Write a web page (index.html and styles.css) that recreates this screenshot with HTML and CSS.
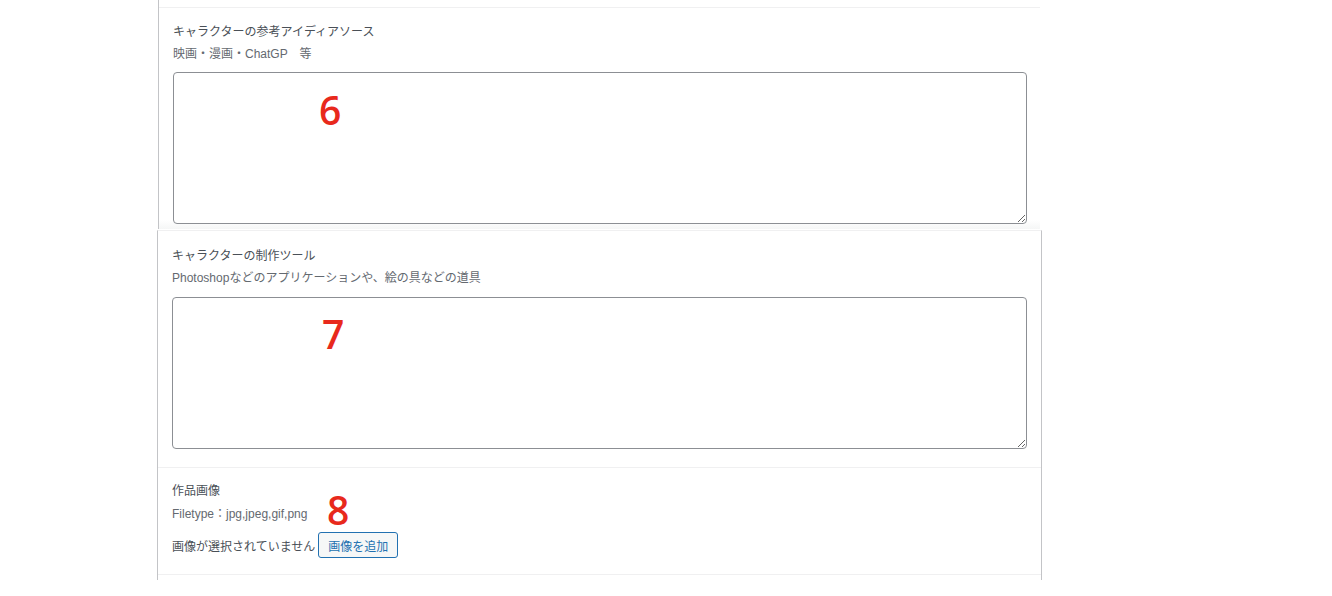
FILE: index.html
```html
<!DOCTYPE html>
<html lang="ja">
<head>
<meta charset="utf-8">
<link rel="stylesheet" href="styles.css">
</head>
<body>
<div class="page">
  <section class="panel panel-top">
    <div class="row-tail"></div>
    <div class="field">
      <div class="label">キャラクターの参考アイディアソース</div>
      <div class="desc">映画・漫画・ChatGP　等</div>
      <div class="area-wrap">
        <textarea class="area"></textarea>
        <span class="mark mark-6">6</span>
      </div>
    </div>
  </section>
  <section class="panel panel-bottom">
    <div class="field field-sep">
      <div class="label">キャラクターの制作ツール</div>
      <div class="desc">Photoshopなどのアプリケーションや、絵の具などの道具</div>
      <div class="area-wrap">
        <textarea class="area"></textarea>
        <span class="mark mark-7">7</span>
      </div>
    </div>
    <div class="field field-img">
      <div class="label">作品画像</div>
      <div class="desc desc-rel">Filetype：jpg,jpeg,gif,png<span class="mark mark-8">8</span></div>
      <div class="img-row">
        <span class="none">画像が選択されていません</span>
        <button class="btn" type="button">画像を追加</button>
      </div>
    </div>
  </section>
</div>
</body>
</html>
```

FILE: styles.css
```css
html, body {
  margin: 0;
  padding: 0;
  background: #fff;
}
body {
  font-family: "Liberation Sans", "Noto Sans CJK JP", sans-serif;
  font-size: 12px;
  color: #3c434a;
  width: 1332px;
  height: 596px;
  overflow: hidden;
}
.page {
  display: flex;
  flex-direction: column;
}
.panel {
  box-sizing: border-box;
  background: #fff;
}
.panel-top {
  margin-left: 158px;
  width: 882px;
  height: 229px;
  border-left: 1px solid #c3c4c7;
  background: linear-gradient(to bottom, #fff 0, #fff 220px, #f5f6f6 229px);
}
.row-tail {
  height: 7px;
  border-bottom: 1px solid #f0f0f1;
}
.panel-top .field {
  padding: 15px 13px 0 14px;
}
.panel-top .desc {
  margin-top: 4px;
}
.panel-top .area-wrap {
  margin-top: 9px;
}
.panel-bottom {
  margin-top: 1px;
  margin-left: 157px;
  width: 885px;
  height: 350px;
  border-left: 1px solid #c3c4c7;
  border-right: 1px solid #c3c4c7;
  border-top: 1px solid #f0f0f1;
}
.panel-bottom .field {
  padding: 16px 14px 0 14px;
}
.field-sep {
  height: 237px;
  box-sizing: border-box;
  border-bottom: 1px solid #f0f0f1;
}
.field-sep .desc {
  margin-top: 4px;
}
.field-sep .area-wrap {
  margin-top: 10px;
}
.panel-bottom .field-img {
  height: 107px;
  box-sizing: border-box;
  padding-top: 14px;
  border-bottom: 1px solid #f0f0f1;
}
.label {
  line-height: 18px;
  color: #4a5057;
}
.desc {
  margin-top: 5px;
  line-height: 18px;
  color: #646970;
}
.desc-rel {
  position: relative;
}
.area-wrap {
  position: relative;
  margin-top: 9px;
}
.area {
  display: block;
  box-sizing: border-box;
  width: 100%;
  height: 152px;
  margin: 0;
  border: 1px solid #8c8f94;
  border-radius: 4px;
  background: #fff;
  resize: vertical;
}
.mark {
  position: absolute;
  font-family: "Open Sans", "Noto Sans", sans-serif;
  font-weight: 600;
  font-size: 39px;
  line-height: 1;
  color: #e8291c;
}
.mark-6 {
  left: 146px;
  top: 18px;
}
.mark-7 {
  left: 150px;
  top: 17px;
}
.mark-8 {
  left: 155px;
  top: -15px;
}
.img-row {
  margin-top: 9px;
  display: flex;
  align-items: center;
  gap: 3px;
}
.none {
  color: #4a5057;
}
.btn {
  font-family: inherit;
  font-size: 12px;
  height: 26px;
  padding: 0 9px;
  border: 1px solid #2271b1;
  border-radius: 3px;
  background: #f6f7f7;
  color: #2271b1;
  cursor: pointer;
}
```
